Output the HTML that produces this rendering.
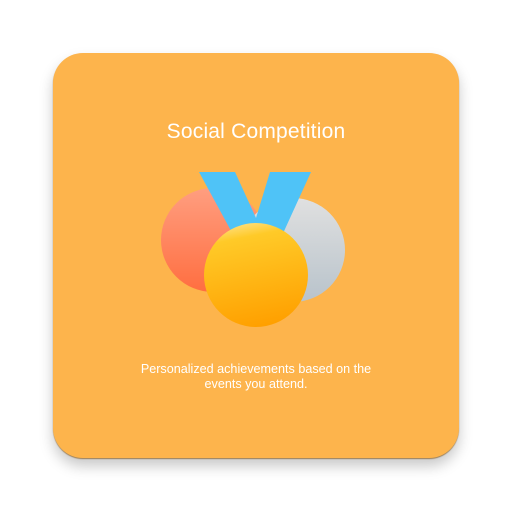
<!DOCTYPE html>
<html><head><style>
html,body{margin:0;padding:0;width:512px;height:512px;background:#fff;overflow:hidden}
.card{position:absolute;left:53px;top:53px;width:406px;height:405px;border-radius:30px;background:#FDB44C;box-shadow:0 1px 1px rgba(120,70,0,.6),0 8px 14px rgba(0,0,0,.22)}
.t{position:absolute;left:0;width:512px;text-align:center;color:#fff;font-family:"Liberation Sans",sans-serif}
</style></head><body>
<div class="card"></div>
<div class="t" style="top:120px;font-size:21px;letter-spacing:0.2px">Social Competition</div>
<svg style="position:absolute;left:0;top:0" width="512" height="512">
<defs>
<linearGradient id="r" x1="0" y1="0" x2="0" y2="1"><stop offset="0" stop-color="#FF9E80"/><stop offset="1" stop-color="#FF6E40"/></linearGradient>
<linearGradient id="g" x1="0" y1="0" x2="0" y2="1"><stop offset="0" stop-color="#E0E0E0"/><stop offset="1" stop-color="#B8C3CB"/></linearGradient>
<linearGradient id="o" x1="0.3" y1="0" x2="0.5" y2="1"><stop offset="0" stop-color="#FFE082"/><stop offset="0.15" stop-color="#FFCA28"/><stop offset="1" stop-color="#FFA000"/></linearGradient>
</defs>
<circle cx="213" cy="240" r="52" fill="url(#r)"/>
<circle cx="293" cy="250" r="52" fill="url(#g)"/>
<polygon points="199,172 235,172 256,218 270,172 311,172 280,240 236,240" fill="#4FC3F7"/>
<circle cx="256" cy="275" r="52" fill="url(#o)"/>
</svg>
<div class="t" style="top:362px;font-size:12.6px;line-height:15px">Personalized achievements based on the<br>events you attend.</div>
</body></html>
